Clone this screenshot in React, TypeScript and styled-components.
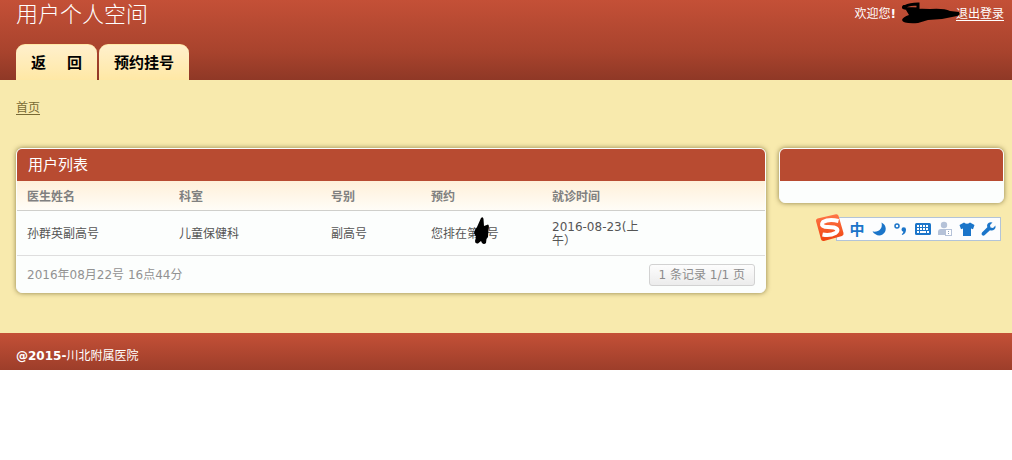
import React from "react";
import styled, { createGlobalStyle } from "styled-components";

const Global = createGlobalStyle`
  *, *::before, *::after { box-sizing: border-box; }
  body {
    margin: 0;
    background: #fff;
    color: #555;
    font: 12px/14px "DejaVu Sans", "Noto Sans CJK SC", sans-serif;
  }
`;

const Header = styled.header`
  display: flex;
  flex-direction: column;
  justify-content: space-between;
  height: 80px;
  padding: 0 8px 0 16px;
  background: linear-gradient(#c45037, #a8432d 65%, #8f3826);
`;

const TopRow = styled.div`
  display: flex;
  justify-content: space-between;
  align-items: flex-start;
`;

const Title = styled.h1`
  margin: 0;
  color: #fff;
  font: 300 22px/30px "DejaVu Sans", "Noto Sans CJK SC", sans-serif;
`;

const Welcome = styled.p`
  display: flex;
  margin: 0;
  padding-top: 7px;
  color: #fff;
`;

const HiddenName = styled.span`
  position: relative;
  width: 60px;

  svg {
    position: absolute;
    top: -6px;
    left: 4px;
  }
`;

const Link = styled.a<{ $light?: boolean }>`
  color: ${(p) => (p.$light ? "#fff" : "#786a35")};
  text-decoration: underline;
  text-underline-offset: 2px;
`;

const Tabs = styled.nav`
  display: flex;
  gap: 2px;
`;

const Tab = styled.a`
  height: 36px;
  padding: 0 15px;
  border: solid #ffe9a8;
  border-width: 1px 0 0;
  border-radius: 9px 9px 0 0;
  background: linear-gradient(#fff0cc, #ffe8a5);
  color: #000;
  font-size: 15px;
  font-weight: bold;
  line-height: 36px;
  text-decoration: none;
`;

const Main = styled.main`
  padding: 21px 8px 40px 16px;
  background: #f8eaad;
`;

const Crumbs = styled.nav`
  height: 47px;
`;

const Columns = styled.div`
  display: grid;
  grid-template-columns: minmax(0, 1fr) 225px;
  align-items: start;
  gap: 13px;
`;

const Side = styled.aside`
  display: flex;
  flex-direction: column;
  gap: 14px;
`;

const Card = styled.section`
  overflow: hidden;
  border: 1px solid #fcfefd;
  border-radius: 6px;
  background: #fcfefd;
  box-shadow: 0 0 5px rgba(70, 55, 0, 0.6);
`;

const CardTitle = styled.h2`
  height: 32px;
  margin: 0;
  padding: 0 11px;
  background: #b84b31;
  color: #fff;
  font-size: 15px;
  font-weight: normal;
  line-height: 32px;
`;

const CardBody = styled.div`
  height: 21px;
`;

const Table = styled.table`
  width: 100%;
  border-collapse: separate;
  border-spacing: 0;
  table-layout: fixed;
`;

const Th = styled.th<{ $w?: number }>`
  width: ${(p) => (p.$w ? `${p.$w}px` : "auto")};
  height: 30px;
  padding: 2px 10px 0;
  border-bottom: 1px solid #cfcfcb;
  color: #808080;
  text-align: left;
`;

const HeadRow = styled.tr`
  background: linear-gradient(#fff0d9, #fffdf8);
`;

const Td = styled.td`
  height: 45px;
  padding: 2px 10px 0;
  border-bottom: 1px solid #dedede;
`;

const Queue = styled.span`
  position: relative;

  svg {
    position: absolute;
    top: -10px;
    left: 43px;
  }
`;

const CardFooter = styled.footer`
  display: flex;
  justify-content: space-between;
  align-items: center;
  height: 36px;
  padding: 2px 10px 0;
  color: #929292;
`;

const Pager = styled.button`
  height: 22px;
  padding: 0 9px;
  border: 1px solid #d2d2d2;
  border-radius: 3px;
  background: linear-gradient(#fdfdfd, #ececec);
  color: #8c8c8c;
  font: inherit;
`;

const ImeBar = styled.div`
  position: relative;
  display: flex;
  align-self: flex-end;
  height: 24px;
  margin-right: 3px;
  padding-left: 9px;
  border: 1px solid #b3c4d8;
  background: #fcfdfe;
`;

const ImeLogo = styled.svg`
  position: absolute;
  top: -5px;
  left: -22px;
`;

const ImeButton = styled.button`
  display: flex;
  align-items: center;
  justify-content: center;
  width: 22px;
  padding: 0;
  border: 0;
  background: none;
  color: #1b75c9;
  font: bold 15px/20px "Noto Sans CJK SC", sans-serif;
`;

const Footer = styled.footer`
  height: 37px;
  padding: 16px 16px 0;
  background: linear-gradient(#c45037, #9d3e2a);
  color: #fff;
`;

const Brand = styled.strong`
  font-weight: bold;
`;

const icons: { label: string; art: React.ReactNode }[] = [
  { label: "夜间", art: <path d="M10.500 1.500C16 4 16 11 11.500 13.500C8 15.500 4 14 1.500 10.500C8 11.500 12 7.500 10.500 1.500Z" fill="#1b75c9" /> },
  {
    label: "标点",
    art: (
      <>
        <circle cx="4" cy="5" r="2" fill="none" stroke="#1b75c9" strokeWidth="1.500" />
        <path d="M8.500 8.500a2.200 2.200 0 1 1 4.500 0q0 4-3.500 5.500l-.8-.8q1.700-1 1.700-2.400q-1.900-.3-1.900-2.300Z" fill="#1b75c9" />
      </>
    ),
  },
  {
    label: "键盘",
    art: (
      <>
        <rect x="0" y="2" width="16" height="12" rx="1.500" fill="#1b75c9" />
        <path d="M2 5h12M2 8h12" stroke="#fff" strokeWidth="2" strokeDasharray="2 1" />
        <path d="M2 11h2M5 11h6M12 11h2" stroke="#fff" strokeWidth="2" />
      </>
    ),
  },
  {
    label: "用户",
    art: (
      <>
        <circle cx="7" cy="4" r="3.200" fill="#b5c2d8" />
        <path d="M1 14V11q0-3 3-3h6q3 0 3 3v3Z" fill="#b5c2d8" />
        <rect x="8.500" y="8.500" width="6" height="6" fill="#fff" stroke="#b5c2d8" />
        <path d="M11 10h1v1h-1zM11 12h1v1h-1z" fill="#8ba0bd" />
      </>
    ),
  },
  { label: "皮肤", art: <path d="M5 1.500q3 2.500 6 0l4.500 2.500-1.500 4.200-2-.7V15H4V7.500l-2 .7L.5 4Z" fill="#1b75c9" /> },
  {
    label: "工具",
    art: <path d="M14.500 4.500 12 7 9.500 6.500 9 4l2.500-2.500Q8 .5 6.500 3q-.8 1.500-.2 3.300L1 11.500q-1 1.500 0 2.500 1.200 1.200 2.500.3L9 9.200q2.500.8 4.300-.7 1.700-1.600 1.200-4Z" fill="#1b75c9" />,
  },
];

export default function App() {
  return (
    <>
      <Global />
      <Header>
        <TopRow>
          <Title>用户个人空间</Title>
          <Welcome>
            欢迎您<Brand>!</Brand>
            <HiddenName>
              <svg width="62" height="24" viewBox="0 0 62 24" aria-hidden="true">
                <path d="M5 5.500Q10 3 18 3V8L7 7.500Q2 7 4 5.500Z" fill="none" stroke="#000" strokeWidth="3" />
                <path d="M6 9Q18 7 30 8Q44 7 50 10L59 11Q61 14 57 15L42 18L28 19L18 22Q3 23 2 19Q3 16 9 14Z" />
              </svg>
            </HiddenName>
            <Link $light href="#logout">退出登录</Link>
          </Welcome>
        </TopRow>
        <Tabs>
          <Tab href="#back">返{"\u00a0\u00a0\u00a0\u00a0"}回</Tab>
          <Tab href="#booking">预约挂号</Tab>
        </Tabs>
      </Header>
      <Main>
        <Crumbs>
          <Link href="#home">首页</Link>
        </Crumbs>
        <Columns>
          <Card>
            <CardTitle>用户列表</CardTitle>
            <Table>
              <thead>
                <HeadRow>
                  <Th $w={152}>医生姓名</Th>
                  <Th $w={152}>科室</Th>
                  <Th $w={100}>号别</Th>
                  <Th $w={121}>预约</Th>
                  <Th $w={121}>就诊时间</Th>
                  <Th />
                </HeadRow>
              </thead>
              <tbody>
                <tr>
                  <Td>孙群英副高号</Td>
                  <Td>儿童保健科</Td>
                  <Td>副高号</Td>
                  <Td>
                    <Queue>
                      您排在第{"\u00a0\u00a0"}号
                      <svg width="16" height="28" viewBox="0 0 16 28" aria-hidden="true">
                        <path d="M7 1Q9-1 9.500 2L10 9L14 7.500Q15.500 8 14.500 13L14 20L12.500 22L12 26Q10 28 8 26L7 24L4 26.500Q1 27 1 24L2 20L0 16Q1 12 3 10Z" />
                      </svg>
                    </Queue>
                  </Td>
                  <Td>2016-08-23(上午）</Td>
                  <Td />
                </tr>
              </tbody>
            </Table>
            <CardFooter>
              <span>2016年08月22号 16点44分</span>
              <Pager type="button">1 条记录 1/1 页</Pager>
            </CardFooter>
          </Card>
          <Side>
            <Card>
              <CardTitle />
              <CardBody />
            </Card>
            <ImeBar>
              <ImeLogo width="30" height="30" viewBox="0 0 30 30" aria-hidden="true">
                <defs>
                  <linearGradient id="ime" x1="0" y1="0" x2="0" y2="1">
                    <stop offset="0" stopColor="#ff7648" />
                    <stop offset="1" stopColor="#f04410" />
                  </linearGradient>
                </defs>
                <path d="M2.500 5.500 21 1.200q2-.3 2.500 1.500L28.500 20q.5 2-1.500 3L9 28q-2.500.5-3-1.700L1 8q-.3-2 1.500-2.500Z" fill="url(#ime)" />
                <path d="M23.500 8Q14 5.500 8 9Q5 12.500 10 13.800L19 14.500Q25 16.500 20.500 20Q15 23 7.500 21.500" fill="none" stroke="#fff" strokeWidth="4" />
              </ImeLogo>
              <ImeButton type="button">中</ImeButton>
              {icons.map((icon) => (
                <ImeButton key={icon.label} type="button" aria-label={icon.label}>
                  <svg width="16" height="16" viewBox="0 0 16 16">{icon.art}</svg>
                </ImeButton>
              ))}
            </ImeBar>
          </Side>
        </Columns>
      </Main>
      <Footer>
        <Brand>@2015-</Brand>川北附属医院
      </Footer>
    </>
  );
}
